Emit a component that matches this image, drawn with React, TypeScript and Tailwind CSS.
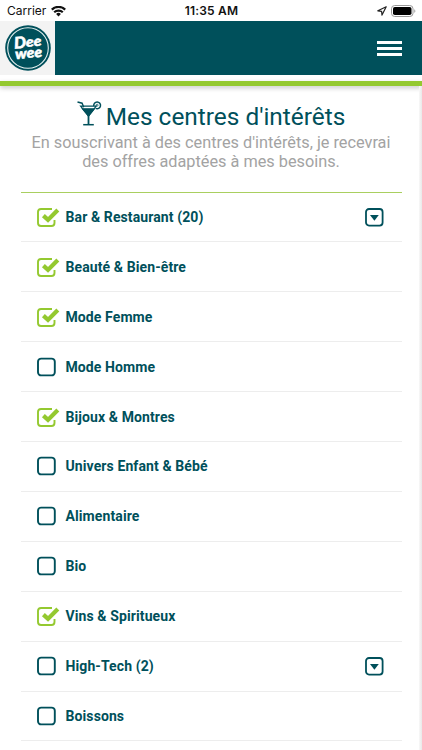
import React, { useState } from 'react';

interface Category {
  id: string;
  label: string;
  count?: number;
  checked: boolean;
}

const CATEGORIES: Category[] = [
  { id: 'bar', label: 'Bar & Restaurant', count: 20, checked: true },
  { id: 'beaute', label: 'Beauté & Bien-être', checked: true },
  { id: 'femme', label: 'Mode Femme', checked: true },
  { id: 'homme', label: 'Mode Homme', checked: false },
  { id: 'bijoux', label: 'Bijoux & Montres', checked: true },
  { id: 'enfant', label: 'Univers Enfant & Bébé', checked: false },
  { id: 'alimentaire', label: 'Alimentaire', checked: false },
  { id: 'bio', label: 'Bio', checked: false },
  { id: 'vins', label: 'Vins & Spiritueux', checked: true },
  { id: 'hightech', label: 'High-Tech', count: 2, checked: false },
  { id: 'boissons', label: 'Boissons', checked: false },
];

const StatusBar: React.FC = () => (
  <div className="grid grid-cols-3 items-center h-[21px] shrink-0 pl-[7px] pr-[6px] pt-px bg-white text-[#111] font-['Inter',sans-serif] text-[12px] leading-none">
    <div className="flex items-center gap-[5px]">
      <span>Carrier</span>
      <svg width="15" height="11" viewBox="0 0 15 11" fill="none" stroke="#111" strokeWidth="2.2">
        <path d="M.8 3.6a9.6 9.6 0 0 1 13.4 0M3.2 6.3a6.2 6.2 0 0 1 8.6 0" />
        <path d="M7.5 10.5 5.1 8a3.5 3.5 0 0 1 4.8 0z" fill="#111" stroke="none" />
      </svg>
    </div>
    <span className="text-center font-semibold tracking-[0.2px] whitespace-nowrap">11:35 AM</span>
    <div className="flex items-center justify-end gap-[4px]">
      <svg width="10" height="10" viewBox="0 0 10 10" fill="none" stroke="#222" strokeWidth="1.2" strokeLinejoin="round">
        <path d="M9.2.8.8 4.8l3.8.5.4 3.8z" />
      </svg>
      <svg width="25" height="12" viewBox="0 0 25 12">
        <rect x=".5" y=".5" width="21.5" height="11" rx="3.2" fill="none" stroke="#999" />
        <rect x="2" y="2" width="18.5" height="8" rx="1.8" fill="#000" />
        <path d="M23.3 4.2c1.4.5 1.4 3.1 0 3.6z" fill="#999" />
      </svg>
    </div>
  </div>
);

const Logo: React.FC = () => (
  <div className="flex items-center justify-center w-[55px] h-full bg-[#f3f3f3]">
    <svg width="46" height="46" viewBox="0 0 46 46">
      <circle cx="23" cy="23" r="22.8" fill="#00505b" />
      <circle cx="23" cy="23" r="20.3" fill="none" stroke="#e6f0f0" strokeWidth="1.1" />
      <g
        transform="rotate(-5 23 23)"
        fill="#fff"
        stroke="#fff"
        strokeWidth=".5"
        fontFamily="Lato, sans-serif"
        fontWeight="900"
        fontStyle="italic"
      >
        <text x="9.5" y="22.6" fontSize="16" textLength="12" lengthAdjust="spacingAndGlyphs">D</text>
        <text x="21.4" y="21.8" fontSize="14" textLength="15.5" lengthAdjust="spacingAndGlyphs">ee</text>
        <text x="9.6" y="33" fontSize="14.5" textLength="27" lengthAdjust="spacingAndGlyphs">wee</text>
      </g>
    </svg>
  </div>
);

const Header: React.FC = () => (
  <header className="shrink-0">
    <div className="flex items-center justify-between h-[54px] bg-[#00505b] pr-5">
      <Logo />
      <button aria-label="Menu" className="flex flex-col gap-[3px] w-[25px]">
        <span className="h-[3px] bg-white" />
        <span className="h-[3px] bg-white" />
        <span className="h-[3px] bg-white" />
      </button>
    </div>
    <div className="h-[6px] bg-white" />
    <div className="h-[5px] bg-[#94c930] shadow-[0_2px_5px_rgba(0,0,0,0.22)]" />
  </header>
);

const CocktailIcon: React.FC = () => (
  <svg width="25" height="25" viewBox="0 0 25 25" fill="none" stroke="#00505b" strokeWidth="1.2">
    <path d="M3.6 5.2h15.6L11.5 15z" />
    <path d="M5.5 7.8h11.8L11.5 15z" fill="#00505b" />
    <path d="M11.5 14v9.5" strokeWidth="1.8" />
    <path d="M6.2 23.7h10.6" strokeWidth="1.5" />
    <path d="M.5 1l4.6 1.2 1.6 4" strokeWidth="1.4" />
    <path d="M16.8 5a3.4 3.4 0 1 1 1.9 2.4" strokeWidth="1.5" />
    <circle cx="20.1" cy="4.2" r="1" strokeWidth=".7" />
  </svg>
);

const Checkbox: React.FC<{ checked: boolean }> = ({ checked }) => (
  <svg width="23" height="20" viewBox="0 0 23 20" fill="none" className="shrink-0">
    {checked ? (
      <>
        <path
          d="M15 2H4.1A3.1 3.1 0 0 0 1 5.1v10.8A3.1 3.1 0 0 0 4.1 19h10.3a3.1 3.1 0 0 0 3.1-3.1V13"
          stroke="#94c930"
          strokeWidth="1.9"
        />
        <path d="M6.4 8.6l4.6 4.3L20.8 3" stroke="#94c930" strokeWidth="4.2" />
      </>
    ) : (
      <rect x="1" y="1.6" width="16.8" height="16.8" rx="3.2" stroke="#00505b" strokeWidth="1.9" />
    )}
  </svg>
);

const ExpandIcon: React.FC = () => (
  <svg width="19" height="19" viewBox="0 0 19 19" fill="none">
    <rect x="1" y="1" width="16.6" height="16.6" rx="3" stroke="#00505b" strokeWidth="1.8" />
    <path d="M5 7h8.8l-4.4 5.8z" fill="#00505b" />
  </svg>
);

interface CategoryRowProps {
  category: Category;
  onToggle: (id: string) => void;
}

const CategoryRow: React.FC<CategoryRowProps> = ({ category, onToggle }) => (
  <li className="flex items-center justify-between h-[49.9px] pl-4 pr-[18px] border-b border-[#ededed]">
    <button onClick={() => onToggle(category.id)} className="flex items-center gap-[6px]">
      <Checkbox checked={category.checked} />
      <span className="text-[14px] leading-5 font-bold tracking-[0.1px] text-[#00505b]">
        {category.label}
        {category.count !== undefined && ` (${category.count})`}
      </span>
    </button>
    {category.count !== undefined && <ExpandIcon />}
  </li>
);

const App: React.FC = () => {
  const [categories, setCategories] = useState(CATEGORIES);

  const toggle = (id: string) =>
    setCategories(categories.map((c) => (c.id === id ? { ...c, checked: !c.checked } : c)));

  return (
    <div className="flex flex-col w-full h-[750px] overflow-hidden bg-white font-['Roboto',sans-serif]">
      <StatusBar />
      <Header />
      <main className="flex flex-1 min-h-0">
        <div className="flex-1 pl-[20.5px] pr-[17.5px] pt-[15px]">
          <div className="flex items-start justify-center gap-[4px] h-[31px]">
            <CocktailIcon />
            <h1 className="text-[24.4px] leading-[31px] text-[#00505b] whitespace-nowrap">Mes centres d'intérêts</h1>
          </div>
          <p className="pt-px text-center text-[16.3px] leading-[19px] text-[#a3a3a3]">
            En souscrivant à des centres d'intérêts, je recevrai
            <br />
            des offres adaptées à mes besoins.
          </p>
          <ul className="mt-[20.6px] border-t border-[#a9cf60]">
            {categories.map((category) => (
              <CategoryRow key={category.id} category={category} onToggle={toggle} />
            ))}
          </ul>
        </div>
        <div className="w-[3px] bg-linear-to-r from-[#f8f8f8] to-[#e9e9e9]" />
      </main>
    </div>
  );
};

export default App;
